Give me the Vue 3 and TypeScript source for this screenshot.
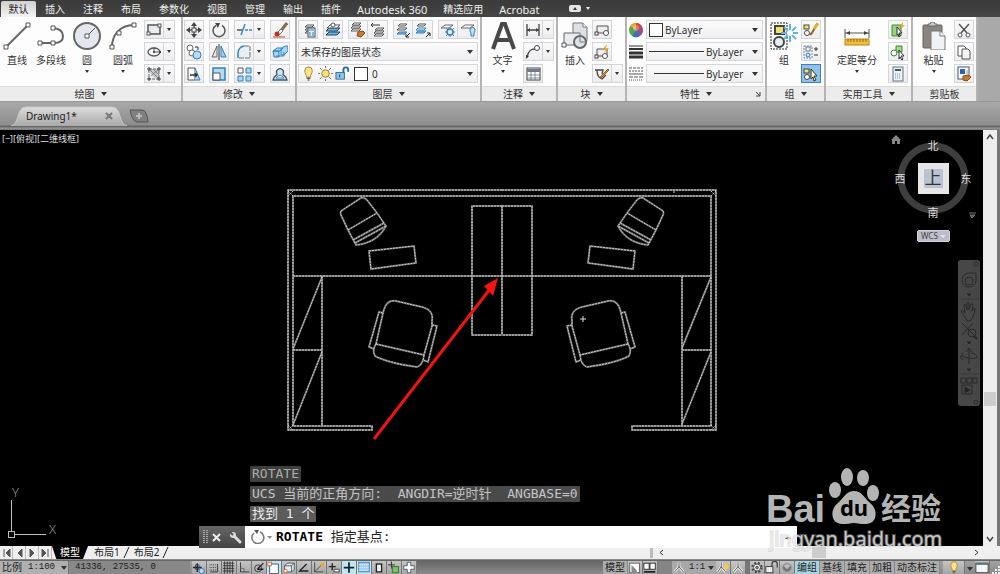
<script setup lang="ts">
import { ref } from 'vue'

const menuTabs: string[] = ['默认', '插入', '注释', '布局', '参数化', '视图', '管理', '输出', '插件']
const wideTabs: string[] = ['Autodesk 360', '精选应用', 'Acrobat']

const activeMenu = ref('默认')
const layerState = ref('未保存的图层状态')
const layer = ref('0')
const command = ref('')

const sheets = '<path d="M5 11l2-2h7l-2 2zM5 8l2-2h7l-2 2zM5 5l2-2h7l-2 2z" fill="#fff" stroke="#555"/>'

const icons: Record<string, string> = {
  rect: '<rect x="2" y="3" width="12" height="9" fill="#e8ebef" stroke="#555" stroke-width="1.500"/><rect x="1" y="10" width="3" height="3" fill="#fff" stroke="#555"/><rect x="12" y="2" width="3" height="3" fill="#fff" stroke="#555"/>',
  ellipse: '<ellipse cx="8" cy="8" rx="6" ry="4" fill="#f4f6f8" stroke="#555" stroke-width="1.300"/><path d="M8 3v5M14 8h-6" stroke="#555"/><circle cx="8" cy="8" r="1" fill="#333"/><rect x="13" y="7" width="2" height="2" fill="#444"/>',
  hatch: '<path d="M3 3h10v10q-8-1-10-10z" fill="#c4c7cc"/><path d="M3 3h10v10H3z" fill="none" stroke="#666" stroke-dasharray="3 1"/><path d="M4 4l9 9M7 3l6 6M13 3L5 10" stroke="#777" stroke-width=".8"/><path d="M1 3h4M3 1v4M11 13h4M13 11v4M1 13h4M3 11v4M11 3h4M13 1v4" stroke="#444"/>',
  move: '<path d="M8 2v12M2 8h12" stroke="#555" stroke-width="1.500"/><rect x="6" y="6" width="4" height="4" fill="#fff" stroke="#444"/><path d="M5 4l3-4 3 4zM5 12l3 4 3-4zM4 5L0 8l4 3zM12 5l4 3-4 3z" fill="#444"/>',
  rotate: '<path d="M5 3.500A6 6 0 1 0 11 3.500" fill="none" stroke="#555" stroke-width="1.500"/><path d="M4 1h5l-2 5z" fill="#444"/>',
  trim: '<path d="M1 8h5" stroke="#555" stroke-width="1.500"/><path d="M9 8h7" stroke="#3a88c8" stroke-width="1.500" stroke-dasharray="3 1"/><path d="M5 13l4-11" stroke="#3a88c8" stroke-width="1.500"/>',
  eraser: '<path d="M15 1l-7 9" stroke="#8c6b4a" stroke-width="3"/><path d="M9 7l-5 5 2 2 5-5z" fill="#eee" stroke="#777"/><circle cx="5" cy="12" r="2.500" fill="#a93a22"/><path d="M1 15h12" stroke="#c43" />',
  copy: '<circle cx="4" cy="4" r="3" fill="#fff" stroke="#666"/><circle cx="6" cy="9" r="3" fill="#fff" stroke="#666"/><circle cx="11" cy="11" r="4" fill="#b9ddf2" stroke="#2f80bf"/><path d="M9 3h3v3" fill="none" stroke="#333"/>',
  mirror: '<path d="M6 2v11H1z" fill="#e5e5e5" stroke="#666"/><path d="M10 2v11h5z" fill="#9ed1ef" stroke="#2f80bf"/><path d="M8 0v16" stroke="#333"/>',
  fillet: '<path d="M2 14V9a7 7 0 0 1 7-7h5v12z" fill="#e9eef3"/><path d="M2 14V9a7 7 0 0 1 6-7" fill="none" stroke="#2f80bf" stroke-width="1.500"/><path d="M8 2h6v12H2" fill="none" stroke="#777" stroke-dasharray="5 1"/>',
  explode: '<path d="M1 7l4-3h6l-3 3zM1 7h6v6H2zM9 5l4-3h3v5l-4 4H9z" fill="#a9d6f0" stroke="#2f80bf"/><path d="M4 12h8v-4" fill="none" stroke="#2f80bf"/>',
  stretch: '<path d="M2 2h7v12H2z" fill="#fff" stroke="#555"/><path d="M9 2l5 12H9" fill="#a9d6f0" stroke="#2f80bf"/><path d="M4 9h7M9 7l2 2-2 2" fill="none" stroke="#333" stroke-width="1.500"/>',
  scale: '<path d="M2 2h12v12H2z" fill="#b5dbf1" stroke="#2f80bf" stroke-width="1.500"/><path d="M2 7h7v7H2z" fill="#fff" stroke="#555"/>',
  array: '<path d="M2 2h5v5H2z" fill="#fff" stroke="#555"/><path d="M10 2h5v5h-5zM2 10h5v5H2zM10 10h5v5h-5z" fill="#a9d6f0" stroke="#2f80bf"/>',
  offset: '<path d="M5 8a3.500 3.500 0 1 1 6 0c0 2 4 2 4 6H1c0-4 4-4 4-6z" fill="#cfe7f5" stroke="#456" stroke-width="1.300"/><path d="M6 10q2-2 4 0l2 2H4z" fill="#fff" stroke="#2f80bf"/>',
  layProp: sheets + '<rect x="8" y="6" width="7" height="9" fill="#e8f0f8" stroke="#456"/><path d="M9 8h5M9 11h2M12 11h2M9 13h2M12 13h2" stroke="#2f80bf"/>',
  layCur: '<path d="M1 13l3-3h11l-3 3zM1 9l3-3h11l-3 3z" fill="#6fb4e0" stroke="#246"/><path d="M2 6l3-3h10l-3 3z" fill="#fff" stroke="#555"/><circle cx="8" cy="3" r="2" fill="#fff" stroke="#555"/>',
  layMatch: '<path d="M1 9l2-2h8l-2 2zM1 6l2-2h8l-2 2zM2 3l2-2h7l-2 2z" fill="#fff" stroke="#555"/><path d="M8 10l5-1 2 2-4 4-4-1z" fill="#c97a2e" stroke="#8a4b14"/>',
  layPrev: '<path d="M4 14l2-2h8l-2 2zM4 11l2-2h8l-2 2zM5 8l2-2h7l-2 2z" fill="#fff" stroke="#555"/><path d="M10 3H1M3 1L1 3l2 2" fill="none" stroke="#333"/>',
  layIso: '<path d="M2 12l2-2h8l-2 2z" fill="#7cbce6" stroke="#2f80bf"/><path d="M2 8l2-2h8l-2 2zM3 4l2-2h7l-2 2z" fill="#fff" stroke="#555"/><path d="M15 11l-4 4M11 12v3h3" fill="none" stroke="#222"/>',
  layUniso: '<path d="M1 11l2-2h8l-2 2z" fill="#7cbce6" stroke="#2f80bf"/><path d="M1 8l2-2h8l-2 2z" fill="#fff" stroke="#2f80bf"/><path d="M2 4l2-2h7l-2 2z" fill="#fff" stroke="#555"/><path d="M11 15l4-4M12 11h3v3" fill="none" stroke="#222"/>',
  layFreeze: '<path d="M1 6l4-3h8l-4 3z" fill="#fff" stroke="#666"/><circle cx="10" cy="10" r="3" fill="#dff0fa" stroke="#2f80bf" stroke-width="1.500"/><path d="M10 5v2M10 13v2M5 10h2M13 10h2M6 6l2 2M12 12l2 2M14 6l-2 2M6 14l2-2" stroke="#2f80bf"/>',
  layOff: '<path d="M1 6l4-3h9l-4 3z" fill="#fff" stroke="#666"/><path d="M10 8a2.500 2.500 0 0 1 5 0c0 2-1 2-1 4v2h-3v-2c0-2-1-2-1-4z" fill="#bfe0f5" stroke="#2f80bf"/>',
  dim: '<path d="M2 2v12M14 2v12M2 8h12" stroke="#444" stroke-width="1.300" fill="none"/><path d="M2 8l3-2v4zM14 8l-3-2v4z" fill="#444"/>',
  leader: '<path d="M2 13c2-7 4-8 8-8" fill="none" stroke="#444" stroke-width="1.300"/><circle cx="12" cy="4" r="2.500" fill="#fff" stroke="#444"/><path d="M1 15l0-4 3 1z" fill="#333"/>',
  table: '<rect x="2" y="2" width="13" height="12" fill="#fff" stroke="#444"/><path d="M2 3h13v3H2z" fill="#778"/><path d="M2 9h13M2 12h13M6 5v9M10 5v9" stroke="#678" stroke-width=".8"/>',
  blkCreate: '<path d="M3 4h11v7H3z" fill="#eee" stroke="#555"/><circle cx="12" cy="11" r="2.500" fill="#fff" stroke="#555"/><rect x="1" y="10" width="3" height="3" fill="#fff" stroke="#444"/>',
  blkEdit: '<path d="M3 5h10v7H3z" fill="#eee" stroke="#555"/><circle cx="11" cy="12" r="2.500" fill="#fff" stroke="#555"/><path d="M13 0l-4 5h3l-2 4 5-5h-3z" fill="#f5a81c"/><rect x="1" y="11" width="3" height="3" fill="#fff" stroke="#444"/>',
  blkAttr: '<path d="M1 4h8l-1 4M3 4c0 5 2 8 5 9l4-4" fill="none" stroke="#444" stroke-width="1.300"/><path d="M14 3l-7 7-1 2 2-1 7-7z" fill="#e39a3b" stroke="#9a5b16"/>',
  grpEdit: '<rect x="1" y="3" width="5" height="4" fill="#f1e46a" stroke="#444"/><circle cx="4" cy="11" r="2.500" fill="#fff" stroke="#444"/><path d="M14 2L9 11l-2 2" stroke="#a35a2a" stroke-width="2"/><path d="M15 1l-4 6" stroke="#d9b32c" stroke-width="3"/>',
  grpAdd: '<path d="M1 2h8v12H1z" fill="none" stroke="#789" stroke-dasharray="2 1"/><rect x="3" y="3" width="4" height="4" fill="#fff" stroke="#678"/><circle cx="5" cy="11" r="2" fill="#cfe6f7" stroke="#2f80bf"/><path d="M11 5h4M13 3v4M11 11h4" stroke="#333"/>',
  grpSel: '<rect x="1" y="3" width="5" height="4" fill="#f1e46a" stroke="#444"/><circle cx="4" cy="11" r="2.500" fill="#fff" stroke="#444"/><path d="M8 3l6 7h-3l2 4-2 1-1-4-2 2z" fill="#fff7c0" stroke="#333"/>',
  selSim: '<path d="M2 3h9v11H2z" fill="#9fd07f" stroke="#3f8a35"/><path d="M7 5l5 6h-3l1 3-1 1-1-3-1 1z" fill="#fff" stroke="#333"/><path d="M13 0l-3 4h2l-1 3 4-4h-2z" fill="#f5a81c"/>',
  quickSel: '<path d="M6 2h6v6H6z" fill="#a7d58a" stroke="#3f8a35"/><circle cx="4" cy="9" r="3" fill="#fff" stroke="#3f8a35"/><path d="M9 6l5 6h-3l2 3-1 1-2-3-1 2z" fill="#fff" stroke="#333"/>',
  calc: '<rect x="3" y="1" width="10" height="14" fill="#eceff3" stroke="#678"/><path d="M5 4h6" stroke="#456" stroke-width="2"/><path d="M5 8h6M5 10h6M5 12h6" stroke="#89a" stroke-dasharray="1 1"/>',
  cut: '<path d="M3 2l8 9M13 2L5 11" stroke="#555" stroke-width="1.500"/><circle cx="4" cy="13" r="2" fill="#fff" stroke="#555"/><circle cx="12" cy="13" r="2" fill="#fff" stroke="#555"/>',
  copyClip: '<path d="M2 2h6l2 2v8H2z" fill="#fff" stroke="#555"/><path d="M6 5h6l2 2v8H6z" fill="#f4f4f4" stroke="#555"/>',
  match: '<rect x="2" y="1" width="11" height="12" fill="#fff" stroke="#456"/><rect x="4" y="3" width="5" height="5" fill="#2f64a8"/><path d="M10 5h2M10 7h2" stroke="#89a"/><path d="M7 10l5-1 3 2-4 4-4-1z" fill="#c97a2e" stroke="#8a4b14"/>',
  bulb: '<path d="M4 5a4 4 0 0 1 8 0c0 3-2 4-2 7H6c0-3-2-4-2-7z" fill="#fbe48a" stroke="#a8862a"/><path d="M6 13h4M7 15h2" stroke="#666" stroke-width="1.500"/>',
  sun: '<circle cx="8" cy="8" r="4" fill="#fae27c" stroke="#8a7530"/><path d="M8 0v2M8 14v2M0 8h2M14 8h2M2 2l2 2M12 12l2 2M14 2l-2 2M4 12l-2 2" stroke="#776a3c"/>',
  unlock: '<rect x="1" y="7" width="9" height="7" fill="#8cc6e8" stroke="#2c6d9c"/><path d="M9 7V4a2.500 2.500 0 0 1 5 0v2" fill="none" stroke="#2c6d9c" stroke-width="2"/><path d="M5 9v3" stroke="#234"/>',
  wheel: '<circle cx="8" cy="8" r="7" fill="#4fa64b"/><path d="M8 8L2 4a7 7 0 0 1 6-3z" fill="#f0a22a"/><path d="M8 8V1a7 7 0 0 1 6 4z" fill="#d94136"/><path d="M8 8l6-3a7 7 0 0 1-2 9z" fill="#a5468f"/><path d="M8 8l4 6a7 7 0 0 1-8 0z" fill="#3b6fc4"/><circle cx="8" cy="6" r="3" fill="#fff" opacity=".3"/>',
  weights: '<path d="M1 2h14" stroke="#333"/><path d="M1 5h14" stroke="#333" stroke-width="2"/><path d="M1 9h14" stroke="#333" stroke-width="3"/><path d="M1 13h14" stroke="#333" stroke-width="3"/>',
  types: '<path d="M1 2h14" stroke="#555" stroke-dasharray="3 1"/><path d="M1 5h14" stroke="#555" stroke-dasharray="2 1"/><path d="M1 8h14" stroke="#555"/><path d="M1 11h14" stroke="#555" stroke-dasharray="4 1"/><path d="M1 14h14" stroke="#555" stroke-dasharray="1 1"/>',
  infer: '<path d="M1 7h10M6 2v10" stroke="#223" stroke-width="1.500"/><path d="M4 4h4v5H4z" fill="none" stroke="#345"/><circle cx="11" cy="11" r="3" fill="#bcd9f0" stroke="#2f70af"/>',
  snap: '<path d="M3 4h8M3 7h8M3 10h8" stroke="#333" stroke-dasharray="1 1"/><path d="M12 3v9H4" fill="none" stroke="#333"/>',
  grid: '<path d="M1 2h13M1 5h13M1 8h13M1 11h13M3 0v14M6 0v14M9 0v14M12 0v14" stroke="#333"/>',
  ortho: '<path d="M4 1v11h10" fill="none" stroke="#333"/><path d="M4 8h4v4" fill="none" stroke="#666"/>',
  polar: '<circle cx="7" cy="8" r="4" fill="none" stroke="#333"/><path d="M6 9l7-7M6 9h7" stroke="#222" stroke-width="1.500"/>',
  osnap: '<path d="M3 3h10v11H3z" fill="#fff" stroke="#346"/><rect x="1" y="1" width="4" height="4" fill="#fff" stroke="#d8622c"/>',
  osnap3: '<path d="M3 5l3-3h8v7l-3 3H3z" fill="#e8ebee" stroke="#456"/><path d="M3 5h8v7M11 5l3-3" fill="none" stroke="#456"/><circle cx="4" cy="11" r="2" fill="#fff" stroke="#d8622c"/>',
  otrack: '<path d="M13 11H3l8-8" fill="none" stroke="#222" stroke-width="1.500"/>',
  ducs: '<path d="M3 1v11h10M3 12l9-9" fill="none" stroke="#444"/><path d="M9 3l4-2 1 3-3 3z" fill="#f5a81c"/>',
  dyn: '<path d="M2 6h8M6 2v8" stroke="#222" stroke-width="1.500"/><path d="M8 9h6v3H8z" fill="#fff" stroke="#333"/>',
  lwt: '<path d="M2 7h12M8 1v12" stroke="#123" stroke-width="2"/>',
  tpy: '<rect x="2" y="1" width="12" height="11" fill="#9fcdf0" stroke="#3d79b4"/><path d="M2 4h12M2 7h12M2 10h12" stroke="#fff" stroke-dasharray="1 1"/>',
  qp: '<rect x="5" y="3" width="6" height="9" fill="#eee" stroke="#222" stroke-width="1.500"/>',
  sc: '<path d="M1 4h8M5 0v8" stroke="#222"/><rect x="6" y="6" width="7" height="7" fill="#7cc265" stroke="#2c6d27"/>',
  am: '<path d="M6 1h4v4h4v4h-4v4H6V9H2V5h4z" fill="#fff" stroke="#456"/>',
  sheet: '<rect x="2" y="2" width="11" height="11" fill="#fff" stroke="#555"/><path d="M4 4l6 6v3H4z" fill="#888"/>',
  views: '<rect x="1" y="2" width="6" height="7" fill="#fff" stroke="#222"/><rect x="8" y="2" width="6" height="7" fill="#fff" stroke="#222"/><path d="M1 12h13" stroke="#222" stroke-width="2"/>',
  anno: '<path d="M8 1v7M8 6l-5 6M8 6l5 6" stroke="#eee" stroke-width="3"/><path d="M8 1v7M8 6l-5 6M8 6l5 6" stroke="#555"/>',
  annoSun: '<path d="M6 1v7M6 6l-4 6M6 6l5 6" stroke="#eee" stroke-width="3"/><path d="M6 1v7M6 6l-4 6M6 6l5 6" stroke="#555"/><circle cx="12" cy="6" r="3" fill="#f7c948"/>',
  gear: '<circle cx="8" cy="7" r="5" fill="none" stroke="#444" stroke-width="3" stroke-dasharray="2 2"/><circle cx="8" cy="7" r="4" fill="#f2f2f2" stroke="#444"/><circle cx="8" cy="7" r="1.500" fill="#888" stroke="#444"/>',
  lock: '<rect x="1" y="6" width="8" height="7" fill="#eee" stroke="#333"/><path d="M8 6V3a3 3 0 0 1 6 0v4" fill="none" stroke="#444" stroke-width="1.500"/>',
  sphere: '<circle cx="8" cy="7" r="5" fill="#777" stroke="#999"/><path d="M4 5a5 5 0 0 1 8 0l-4 4z" fill="#bbb"/>',
  win: '<rect x="1" y="2" width="14" height="11" fill="#f6f6f6" stroke="#333"/><path d="M1 3h14" stroke="#578" stroke-width="2"/>',
}

interface Tool { icon: string; label: string; split?: boolean; on?: boolean }
const t = (icon: string, label: string, split = false, on = false): Tool => ({ icon, label, split, on })

const drawTools = [t('rect', '矩形', true), t('ellipse', '椭圆', true), t('hatch', '图案填充', true)]
const modifyCols: Tool[][] = [
  [t('move', '移动'), t('copy', '复制'), t('stretch', '拉伸')],
  [t('rotate', '旋转'), t('mirror', '镜像'), t('scale', '缩放')],
  [t('trim', '修剪', true), t('fillet', '圆角', true), t('array', '阵列', true)],
  [t('eraser', '删除'), t('explode', '分解'), t('offset', '偏移')],
]
const layerGroups: Tool[][] = [
  [t('layProp', '图层特性')],
  [t('layCur', '置为当前')],
  [t('layMatch', '匹配'), t('layPrev', '上一个')],
  [t('layIso', '隔离'), t('layUniso', '取消隔离')],
  [t('layFreeze', '冻结'), t('layOff', '关闭')],
]
const annoTools = [t('dim', '线性', true), t('leader', '引线', true), t('table', '表格')]
const blockTools = [t('blkCreate', '创建块'), t('blkEdit', '编辑块'), t('blkAttr', '编辑属性', true)]
const groupTools = [t('grpEdit', '组编辑'), t('grpAdd', '添加'), t('grpSel', '组选择', false, true)]
const utilTools = [t('selSim', '快速选择'), t('quickSel', '全部选择'), t('calc', '计算器')]
const clipTools = [t('cut', '剪切'), t('copyClip', '复制剪裁'), t('match', '特性匹配')]

const props = [
  { icon: 'wheel', label: '颜色', mark: 'swatch' },
  { icon: 'weights', label: '线宽', mark: 'rule' },
  { icon: 'types', label: '线型', mark: 'rule short' },
]

const toggles: Tool[] = [
  t('infer', '推断约束'), t('snap', '捕捉'), t('grid', '栅格'), t('ortho', '正交'), t('polar', '极轴'),
  t('osnap', '对象捕捉', false, true), t('osnap3', '三维对象捕捉'), t('otrack', '对象追踪'), t('ducs', '动态 UCS'),
  t('dyn', '动态输入'), t('lwt', '线宽显示', false, true), t('tpy', '透明度', false, true), t('qp', '快捷特性'),
  t('sc', '选择循环'), t('am', '注释监视器'),
]
const textToggles = ['编组', '基线', '填充', '加粗', '动态标注']

/* Left half of the floor plan; the right half is its reflection. */
const halfPlan: string[] = [
  'M502 190H288V430H372V426H293V196H502',
  'M502 206H472V335H502',
  'M293 276H502',
  'M322 276V425',
  'M293 350H322',
  'M341 211L361 198Q364 197 367 200L377 213L386 226Q377 243 356 245L348 230L341 215Q340 213 341 211',
  'M348 230L377 213M353 240L384 223M355 243L386 226',
  'M369 251L414 246L416 263L371 269Z',
  'M376 344L383 313Q386 299 396 301L422 307Q434 310 432 321L432 326L424 355M376 344L424 355',
  'M376 344Q372 350 375 356Q388 363 417 367Q423 365 424 355',
  'M383 313L379 312L369 347L374 349M432 325L437 326L428 362L423 360',
]
const fullPlan: string[] = [
  'M502 206V335',
  'M322 277L293 349M322 352L293 425',
  'M711 277L682 348M711 352L682 424',
]
</script>

<template>
  <div class="app">
    <nav class="menu" aria-label="功能区">
      <button v-for="m in menuTabs" :key="m" :class="{ active: m === activeMenu }" @click="activeMenu = m">{{ m }}</button>
      <button v-for="m in wideTabs" :key="m" :class="{ latin: m !== '精选应用' }" @click="activeMenu = m">{{ m }}</button>
      <button class="min" aria-label="最小化功能区">
        <svg width="22" height="8" viewBox="0 0 22 8"><rect width="12" height="7" rx="2" fill="#e4e4e4" /><path d="M4 5l2-3 2 3z" fill="#333" /><path d="M17 2h4l-2 3z" fill="#eee" /></svg>
      </button>
    </nav>

    <div class="ribbon">
      <section class="panel draw">
        <div class="body">
          <button class="big b34"><svg viewBox="0 0 28 28"><path d="M3 25L25 3" stroke="#666" stroke-width="2" /><path d="M1 23h4v4H1zM23 1h4v4h-4z" fill="#fff" stroke="#555" /></svg>直线</button>
          <button class="big b34"><svg viewBox="0 0 28 28"><path d="M3 21H17Q26 21 26 14T16 6" fill="none" stroke="#666" stroke-width="2" /><path d="M1 19h4v4H1zM14 19h4v4h-4zM14 4h4v4h-4z" fill="#fff" stroke="#555" /></svg>多段线</button>
          <button class="big b38"><svg viewBox="0 0 28 28"><circle cx="14" cy="14" r="13" fill="#e4e8ee" stroke="#666" stroke-width="2" /><path d="M14 14l8-8" stroke="#555" /><path d="M12 12h4v4h-4z" fill="#fff" stroke="#555" /></svg>圆<i class="down"></i></button>
          <button class="big b34"><svg viewBox="0 0 28 28"><path d="M3 25C3 14 10 3 25 3" fill="none" stroke="#666" stroke-width="2" /><path d="M1 23h4v4H1zM8 9h4v4H8zM23 1h4v4h-4z" fill="#fff" stroke="#555" /></svg>圆弧<i class="down"></i></button>
          <div class="col">
            <div v-for="b in drawTools" :key="b.icon" class="tool">
              <button :aria-label="b.label"><svg viewBox="0 0 16 16" v-html="icons[b.icon]"></svg></button>
              <button v-if="b.split" class="more" :aria-label="b.label + '选项'"><i class="down"></i></button>
            </div>
          </div>
        </div>
        <footer><button>绘图<i class="tri"></i></button></footer>
      </section>

      <section class="panel modify">
        <div class="body cols">
          <div v-for="(c, i) in modifyCols" :key="i" class="col">
            <div v-for="b in c" :key="b.icon" class="tool">
              <button :aria-label="b.label"><svg viewBox="0 0 16 16" v-html="icons[b.icon]"></svg></button>
              <button v-if="b.split" class="more" :aria-label="b.label + '选项'"><i class="down"></i></button>
            </div>
          </div>
        </div>
        <footer><button>修改<i class="tri"></i></button></footer>
      </section>

      <section class="panel layers">
        <div class="body stack">
          <div class="groups">
            <div v-for="(g, i) in layerGroups" :key="i" class="tool">
              <button v-for="b in g" :key="b.icon" :aria-label="b.label"><svg viewBox="0 0 16 16" v-html="icons[b.icon]"></svg></button>
            </div>
          </div>
          <div class="combo">
            <select v-model="layerState" aria-label="图层状态"><option>未保存的图层状态</option></select><i class="tri"></i>
          </div>
          <div class="combo">
            <svg v-for="n in ['bulb', 'sun', 'unlock']" :key="n" viewBox="0 0 16 16" v-html="icons[n]"></svg>
            <span class="swatch"></span>
            <select v-model="layer" aria-label="图层"><option>0</option></select><i class="tri"></i>
          </div>
        </div>
        <footer><button>图层<i class="tri"></i></button></footer>
      </section>

      <section class="panel anno">
        <div class="body">
          <button class="big b41"><svg viewBox="0 0 28 28"><path d="M4 27L13 2h3l9 25M8 18h13" fill="none" stroke="#484848" stroke-width="4" /></svg>文字<i class="down"></i></button>
          <div class="col">
            <div v-for="b in annoTools" :key="b.icon" class="tool">
              <button :aria-label="b.label"><svg viewBox="0 0 16 16" v-html="icons[b.icon]"></svg></button>
              <button v-if="b.split" class="more" :aria-label="b.label + '选项'"><i class="down"></i></button>
            </div>
          </div>
        </div>
        <footer><button>注释<i class="tri"></i></button></footer>
      </section>

      <section class="panel block">
        <div class="body">
          <button class="big b34"><svg viewBox="0 0 28 28"><path d="M12 1h10l4 4v14H12z" fill="#dde1e6" stroke="#777" /><path d="M22 1v4h4" fill="#fff" stroke="#777" /><path d="M3 11h16v12H3z" fill="#e9ebee" stroke="#666" /><circle cx="19" cy="20" r="6" fill="#dfe4ea" stroke="#666" stroke-width="2" /><path d="M19 13v7h7" fill="none" stroke="#777" /><path d="M1 21h4v4H1z" fill="#fff" stroke="#555" /></svg>插入</button>
          <div class="col">
            <div v-for="b in blockTools" :key="b.icon" class="tool">
              <button :aria-label="b.label"><svg viewBox="0 0 16 16" v-html="icons[b.icon]"></svg></button>
              <button v-if="b.split" class="more" :aria-label="b.label + '选项'"><i class="down"></i></button>
            </div>
          </div>
        </div>
        <footer><button>块<i class="tri"></i></button></footer>
      </section>

      <section class="panel props">
        <div class="body stack">
          <div v-for="p in props" :key="p.icon" class="prop">
            <svg viewBox="0 0 16 16" v-html="icons[p.icon]"></svg>
            <div class="combo">
              <span :class="p.mark"></span>
              <select :aria-label="p.label"><option>ByLayer</option></select><i class="tri"></i>
            </div>
          </div>
        </div>
        <footer>
          <button>特性<i class="tri"></i></button>
          <button class="launch" aria-label="特性对话框"><svg width="6" height="6" viewBox="0 0 6 6"><path d="M1 1l4 4M5 1v4H1" fill="none" stroke="#444" /></svg></button>
        </footer>
      </section>

      <section class="panel group">
        <div class="body">
          <button class="big b34"><svg viewBox="0 0 28 28"><rect x="1" y="1" width="16" height="26" fill="none" stroke="#222" stroke-dasharray="2 1" /><rect x="5" y="4" width="9" height="8" fill="#f1e46a" stroke="#444" stroke-width="2" /><circle cx="9" cy="20" r="5" fill="#e8edf2" stroke="#444" stroke-width="2" /><path d="M20 2v18M11 11h18M14 5l12 12M26 5L14 17" stroke="#62b1e4" stroke-width="2" /><circle cx="20" cy="11" r="3" fill="#fff" /></svg>组</button>
          <div class="col">
            <div v-for="b in groupTools" :key="b.icon" class="tool">
              <button :class="{ on: b.on }" :aria-label="b.label"><svg viewBox="0 0 16 16" v-html="icons[b.icon]"></svg></button>
            </div>
          </div>
        </div>
        <footer><button>组<i class="tri"></i></button></footer>
      </section>

      <section class="panel utils">
        <div class="body">
          <button class="big b62"><svg viewBox="0 0 28 28"><path d="M2 7v9M26 7v9M2 11h24" stroke="#555" fill="none" /><path d="M3 11l4-2v4zM25 11l-4-2v4z" fill="#444" /><rect x="2" y="17" width="24" height="6" fill="#f0bd3c" stroke="#b8851a" /><path d="M5 17v3M8 17v3M11 17v3M14 17v3M17 17v3M20 17v3M23 17v3" stroke="#96690c" /></svg>定距等分<i class="down"></i></button>
          <div class="col">
            <div v-for="b in utilTools" :key="b.icon" class="tool">
              <button :aria-label="b.label"><svg viewBox="0 0 16 16" v-html="icons[b.icon]"></svg></button>
            </div>
          </div>
        </div>
        <footer><button>实用工具<i class="tri"></i></button></footer>
      </section>

      <section class="panel clip">
        <div class="body">
          <button class="big b41"><svg viewBox="0 0 28 28"><rect x="3" y="3" width="19" height="23" rx="1" fill="#8a8580" stroke="#67625e" /><path d="M8 4h9V2h-2l-1-2h-3l-1 2H8z" fill="#ccc" stroke="#666" /><path d="M11 9h9l5 5v14H11z" fill="#f0f2f6" stroke="#777" /><path d="M20 9v5h5" fill="#fff" stroke="#777" /></svg>粘贴<i class="down"></i></button>
          <div class="col">
            <div v-for="b in clipTools" :key="b.icon" class="tool">
              <button :aria-label="b.label"><svg viewBox="0 0 16 16" v-html="icons[b.icon]"></svg></button>
            </div>
          </div>
        </div>
        <footer><button>剪贴板</button></footer>
      </section>
    </div>

    <div class="docs">
      <div class="doc">
        <svg class="shape" viewBox="0 0 116 20" preserveAspectRatio="none">
          <defs><linearGradient id="tabfill" x1="0" y1="0" x2="0" y2="1"><stop offset="0" stop-color="#dcdcdc" /><stop offset="1" stop-color="#a8a8a8" /></linearGradient></defs>
          <path d="M0 20C9 18 5 1 15 1H101C111 1 107 18 116 20" fill="url(#tabfill)" stroke="#c9c9c9" />
        </svg>
        <button class="name">Drawing1*</button>
        <button class="close" aria-label="关闭图形"><svg width="8" height="8" viewBox="0 0 8 8"><path d="M1 1l6 6M7 1L1 7" stroke="#777" stroke-width="2" /></svg></button>
      </div>
      <button class="new" aria-label="新图形"><svg width="20" height="14" viewBox="0 0 20 14"><path d="M1 1h12q5 0 6 12H8Q3 12 1 1z" fill="#808080" stroke="#555" /><path d="M10 4v6M7 7h6" stroke="#bbb" stroke-width="2" /></svg></button>
    </div>

    <main class="work">
      <div class="canvas">
        <svg class="plan" viewBox="0 130 983 416">
          <g class="ghost">
            <path v-for="d in halfPlan" :key="d" :d="d" />
            <g transform="matrix(-1 0 0 1 1004 0)"><path v-for="d in halfPlan" :key="d" :d="d" /></g>
            <path v-for="d in fullPlan" :key="d" :d="d" />
          </g>
          <g class="dash">
            <path v-for="d in halfPlan" :key="d" :d="d" />
            <g transform="matrix(-1 0 0 1 1004 0)"><path v-for="d in halfPlan" :key="d" :d="d" /></g>
            <path v-for="d in fullPlan" :key="d" :d="d" />
            <path d="M288 191l5 5M293 191l-5 5M711 191l5 5M716 191l-5 5M288 425l5 5M293 425l-5 5M711 425l5 5M716 425l-5 5M673 192h3" />
          </g>
          <path d="M580 319h6M583 316v6" stroke="#ddd" />
          <path d="M374 439L490 289" stroke="#ee1410" stroke-width="3" />
          <path d="M498 278L493 296L484 286Z" fill="#f41410" />
          <g fill="none" stroke="#bdbdbd"><path d="M11.500 500V531M15 534.500H46" /><rect x="8.500" y="531.500" width="6" height="6" /></g>
          <text x="12" y="497" class="axis">Y</text>
          <text x="49" y="534" class="axis">X</text>
        </svg>

        <div class="viewlabel">[−][俯视][二维线框]</div>

        <div class="cube">
          <svg viewBox="890 130 93 115">
            <circle cx="933" cy="178" r="32" fill="none" stroke="#3e3e3e" stroke-width="7" />
            <path d="M896 135l5 5h-1v4h-3v-3h-2v3h-3v-4h-1z" fill="#858585" />
            <rect x="918" y="163" width="31" height="31" fill="#e6e6e6" />
            <rect x="924" y="169" width="19" height="19" fill="#b9c4d0" />
            <path d="M969 213h7M970 215h5l-3 3z" stroke="#777" fill="#555" />
            <text x="933" y="184" class="up">上</text>
            <g class="dir"><text x="933" y="150">北</text><text x="933" y="217">南</text><text x="900" y="183">西</text><text x="966" y="183">东</text></g>
          </svg>
        </div>
        <button class="wcs">WCS<i></i></button>

        <div class="navbar">
          <svg viewBox="0 0 22 146" fill="none" stroke="#292929">
            <circle cx="18" cy="4" r="2" /><circle cx="18" cy="142" r="2" />
            <path d="M11 13h7v8a7 7 0 1 1-7-8z" /><circle cx="11" cy="21" r="4" />
            <path d="M9 34h4l-2 2zM9 82h4l-2 2zM9 109h4l-2 2z" fill="#222" />
            <path d="M1 39h20M1 114h20" stroke="#3a3a3a" />
            <path d="M7 57l-4-6q1-2 3 1l1 1-1-8q1-2 2 0l1 5v-7q1-2 2 0v7l2-6q2-1 2 1l-1 6 2-3q2 0 1 2l-2 7-3 4H9z" />
            <path d="M4 63l12 12M15 63L4 75" /><circle cx="14" cy="73" r="4" /><path d="M16 76l3 3" stroke-width="2" />
            <path d="M11 89v15M8 92l3-4 3 4M5 93q-4 4 6 5t8-2-6-3M5 100l-3-3 3-2" />
            <path d="M3 118h5v5H3zM9 118h5v5H9zM15 118h4v5h-4zM4 125h10v9H4z" /><path d="M7 127l5 3-5 3z" fill="#222" />
          </svg>
        </div>

        <div class="dock">
          <div class="line old">ROTATE</div>
          <div class="line mid">UCS 当前的正角方向:&nbsp; ANGDIR=逆时针&nbsp; ANGBASE=0</div>
          <div class="line">找到 1 个</div>
          <div class="cmd">
            <div class="grip">
              <svg width="6" height="16" viewBox="0 0 6 16"><path d="M1 1v14M4 1v14" stroke="#aaa" stroke-width="2" stroke-dasharray="1 1" /></svg>
              <button aria-label="关闭命令行"><svg width="9" height="9" viewBox="0 0 9 9"><path d="M1 1l7 7M8 1L1 8" stroke="#eee" stroke-width="2" /></svg></button>
              <button aria-label="自定义"><svg width="13" height="13" viewBox="0 0 13 13"><path d="M5 5l6 6" stroke="#ddd" stroke-width="3" stroke-linecap="round" /><circle cx="4" cy="4" r="3" fill="#ddd" /><path d="M0 0l4 4" stroke="#555" stroke-width="2" /></svg></button>
            </div>
            <svg width="22" height="14" viewBox="0 0 22 14"><path d="M4 3a6 6 0 1 0 6-1" fill="none" stroke="#777" stroke-width="1.500" /><path d="M4 0h5l-2 4z" fill="#555" /><path d="M17 6h5l-2 3z" fill="#888" /></svg>
            <label for="cmd"><b>ROTATE</b> 指定基点:</label>
            <input id="cmd" v-model="command" />
            <button class="recent" aria-label="历史记录"><i></i></button>
          </div>
        </div>
      </div>

      <div class="vscroll">
        <button aria-label="向上滚动"><svg width="8" height="6" viewBox="0 0 8 6"><path d="M1 5l3-4 3 4" fill="none" stroke="#444" stroke-width="1.500" /></svg></button>
        <div class="thumb"></div>
        <button aria-label="向下滚动"><svg width="8" height="6" viewBox="0 0 8 6"><path d="M1 1l3 4 3-4" fill="none" stroke="#444" stroke-width="1.500" /></svg></button>
      </div>
    </main>

    <div class="sheets">
      <button v-for="(d, i) in ['M3 1v8M9 1L5 5l4 4z', 'M8 1L4 5l4 4z', 'M3 1l4 4-4 4z', 'M8 1v8M2 1l4 4-4 4z']" :key="i" class="step" :aria-label="'布局导航 ' + (i + 1)">
        <svg width="11" height="10" viewBox="0 0 11 10"><path :d="d" fill="#555" stroke="#555" /></svg>
      </button>
      <button class="sheet model">模型</button>
      <button class="sheet">布局1</button><svg width="8" height="13" viewBox="0 0 8 13"><path d="M1 12L6 1" stroke="#222" /></svg>
      <button class="sheet">布局2</button><svg width="8" height="13" viewBox="0 0 8 13"><path d="M1 12L6 1" stroke="#222" /></svg>
      <div class="hscroll">
        <i class="splitter"></i>
        <button aria-label="向左滚动"><svg width="5" height="7" viewBox="0 0 5 7"><path d="M4 1L1 3.500 4 6" fill="none" stroke="#333" /></svg></button>
        <div class="thumb"></div>
        <button aria-label="向右滚动"><svg width="5" height="7" viewBox="0 0 5 7"><path d="M1 1l3 2.500L1 6" fill="none" stroke="#333" /></svg></button>
      </div>
    </div>

    <div class="status">
      <button class="scale">比例 <span>1:100</span><i class="tri"></i></button>
      <div class="coords">41336, 27535, 0</div>
      <button v-for="b in toggles" :key="b.icon" class="tg" :class="{ on: b.on }" :aria-label="b.label"><svg viewBox="0 0 16 14" v-html="icons[b.icon]"></svg></button>
      <div class="fill"></div>
      <button class="txt">模型</button>
      <button class="tg" aria-label="布局"><svg viewBox="0 0 16 14" v-html="icons.sheet"></svg></button>
      <button class="tg" aria-label="快速查看"><svg viewBox="0 0 16 14" v-html="icons.views"></svg></button>
      <div class="dark"></div>
      <button class="ratio"><svg viewBox="0 0 16 14" v-html="icons.anno"></svg><span>1:1</span><i class="tri"></i></button>
      <button class="tg" aria-label="注释可见性"><svg viewBox="0 0 16 14" v-html="icons.annoSun"></svg></button>
      <button class="tg" aria-label="自动缩放"><svg viewBox="0 0 16 14" v-html="icons.anno"></svg></button>
      <div class="gap"></div>
      <button class="tg" aria-label="切换工作空间"><svg viewBox="0 0 16 14" v-html="icons.gear"></svg></button>
      <button class="tg" aria-label="锁定"><svg viewBox="0 0 16 14" v-html="icons.lock"></svg></button>
      <button class="tg" aria-label="硬件加速"><svg viewBox="0 0 16 14" v-html="icons.sphere"></svg></button>
      <button v-for="x in textToggles" :key="x" class="txt" :class="{ on: x === '编组' }">{{ x }}</button>
      <button class="tg lamp" aria-label="隔离对象"><svg viewBox="0 0 16 16" v-html="icons.bulb"></svg></button>
      <i class="tri"></i>
      <button class="tg" aria-label="全屏显示"><svg viewBox="0 0 16 14" v-html="icons.win"></svg></button>
      <svg class="corner" width="8" height="8" viewBox="0 0 8 8"><path d="M7 0v8M4 3v5M1 6v2" stroke="#eee" stroke-dasharray="2 1" stroke-width="2" /></svg>
    </div>

    <svg class="mark" viewBox="768 466 180 88">
      <g fill="#b4b4b4">
        <text x="766" y="522" class="bai">Bai</text>
        <ellipse cx="847" cy="477" rx="6" ry="9" /><ellipse cx="863" cy="478" rx="6" ry="8" />
        <ellipse cx="835" cy="490" rx="6" ry="8" /><ellipse cx="873" cy="493" rx="6" ry="8" />
        <path d="M854 491C861 491 864 497 868 501C874 506 877 511 875 518C872 526 863 524 854 523C845 524 836 526 833 518C831 511 834 506 840 501C844 497 847 491 854 491Z" />
        <text x="881" y="519" class="jy">经验</text>
      </g>
      <text x="854" y="516" class="du">du</text>
      <text x="769" y="546" class="url">jingyan.baidu.com</text>
    </svg>
  </div>
</template>

<style>
body { margin: 0; background: #000; }
</style>

<style scoped>
.app { position: relative; display: flex; flex-direction: column; min-height: 100vh; overflow: hidden; font: 10px/14px "Noto Sans", "Noto Sans CJK SC", sans-serif; color: #333; }
button, select, input { font: inherit; color: inherit; border: 0; margin: 0; padding: 0; background: none; appearance: none; border-radius: 0; outline: 0; }
button { cursor: pointer; }
svg { display: block; flex: none; }

.menu { display: flex; height: 17px; background: linear-gradient(#3a3a3a, #454545); color: #eee; padding-left: 1px; box-sizing: border-box; }
.menu button { padding: 0 9px; white-space: nowrap; line-height: 17px; margin-top: 1px; height: 16px; }
.menu button.active { width: 35px; padding: 0; background: linear-gradient(#cfcfcf, #f4f4f4); color: #222; border-radius: 2px 2px 0 0; }
.menu button.latin { font-size: 11px; padding: 0 7px; }
.menu .min { display: flex; align-items: center; margin-left: 13px; }

.ribbon { display: flex; height: 85px; background: linear-gradient(90deg, #c4c4c4, #a9a9a9); border-bottom: 1px solid #989898; box-sizing: border-box; }
.panel { display: flex; flex-direction: column; box-sizing: border-box; border-right: 2px solid #b4b4b4; background: #fdfdfd; flex: none; }
.draw { width: 183px; }
.modify { width: 114px; }
.layers { width: 185px; }
.anno { width: 76px; }
.block { width: 69px; }
.props { width: 140px; }
.group { width: 59px; }
.utils { width: 87px; }
.clip { width: 65px; }
.body { display: flex; flex: 1; padding-top: 3px; }
.cols { gap: 5px; padding-left: 1px; }
.stack { flex-direction: column; gap: 3px; padding-left: 1px; padding-right: 2px; }
.panel footer { position: relative; display: flex; justify-content: center; height: 15px; background: #ececec; border-top: 1px solid #dcdcdc; box-sizing: border-box; }
.panel footer button { display: flex; align-items: center; gap: 6px; }
.panel footer .launch { position: absolute; right: 4px; top: 4px; }
.big { display: flex; flex-direction: column; align-items: center; line-height: 14px; white-space: nowrap; }
.big svg { width: 28px; height: 28px; margin: 2px 0 3px; }
.b34 { width: 34px; }
.b38 { width: 38px; }
.b41 { width: 41px; }
.b62 { width: 62px; }
.draw .body .col { margin-left: 4px; }
.col { display: flex; flex-direction: column; gap: 3px; }
.tool { display: flex; height: 19px; }
.tool button { display: flex; align-items: center; justify-content: center; width: 20px; height: 19px; box-sizing: border-box; border: 1px solid #d3d5d9; background: linear-gradient(#fafafa, #ededf0); }
.tool button + button { border-left: 0; }
.tool .more { width: 11px; }
.tool .on { background: #8fc1ec; border-color: #3d7fb8; }
.tool svg, .prop > svg { width: 16px; height: 16px; }
.groups { display: flex; gap: 5px; }
.down { width: 0; height: 0; border: 2px solid transparent; border-top: 3px solid #333; border-bottom: 0; }
.big .down { margin-top: 3px; }
.tri { width: 0; height: 0; border: 3px solid transparent; border-top: 4px solid #333; border-bottom: 0; flex: none; }
.combo { position: relative; display: flex; align-items: center; gap: 2px; height: 19px; flex: 1; min-width: 0; box-sizing: border-box; border: 1px solid #d6d6da; background: linear-gradient(#fbfbfb, #efeff1); padding: 0 2px; }
.stack > .combo { flex: none; }
.combo svg { width: 15px; height: 15px; }
.combo select { flex: 1; min-width: 0; height: 17px; }
.combo .tri { position: absolute; right: 4px; top: 7px; pointer-events: none; }
.swatch { width: 12px; height: 12px; border: 1px solid #333; background: #fff; margin: 0 2px; flex: none; }
.prop .swatch { margin: 0; }
.prop { display: flex; gap: 2px; align-items: center; height: 19px; }
.rule { height: 1px; background: #333; width: 55px; flex: none; }
.rule.short { width: 50px; margin-left: 5px; }

.docs { display: flex; align-items: flex-start; height: 28px; padding: 4px 0 0 11px; box-sizing: border-box; background: linear-gradient(#a9a9a9, #8e8e8e 22px, #8e8e8e 23px, #666 24px, #666 25px, #999 26px, #777); }
.doc { position: relative; display: flex; align-items: center; width: 116px; height: 20px; }
.shape { position: absolute; inset: 0; width: 100%; height: 100%; }
.doc button { position: relative; }
.name { margin-left: 15px; color: #222; }
.close { margin-left: auto; margin-right: 14px; }
.new { margin: 3px 0 0 2px; }

.work { display: flex; flex: 1; min-height: 416px; background: #000; }
.canvas { position: relative; flex: 1; min-width: 0; }
.plan { position: absolute; inset: 0; width: 100%; height: 100%; }
.ghost { fill: none; stroke: #666; stroke-width: 2; }
.dash { fill: none; stroke: #ccc; stroke-width: 1; stroke-dasharray: 2 1; }
.axis { font: 300 13px "Open Sans", "Noto Sans", sans-serif; fill: #aaa; }
.viewlabel { position: absolute; left: 2px; top: 2px; font-size: 9px; color: #ddd; }
.cube { position: absolute; right: 0; top: 0; }
.cube svg { width: 93px; height: 115px; }
.up { font: 17px "Noto Sans CJK SC", sans-serif; fill: #333; text-anchor: middle; }
.dir { font: 11px "Noto Sans CJK SC", sans-serif; fill: #ddd; text-anchor: middle; }
.wcs { position: absolute; right: 33px; top: 100px; display: flex; align-items: center; justify-content: space-between; width: 33px; height: 12px; box-sizing: border-box; padding: 0 3px; border-radius: 2px; background: #bcbcca; border: 1px solid #d5d5df; color: #444; font-size: 8px; line-height: 10px; }
.wcs i { border: 3px solid transparent; border-top: 3px solid #dfe6f2; border-bottom: 0; }
.navbar { position: absolute; right: 3px; top: 130px; border-radius: 3px; background: #474747; }
.navbar svg { width: 22px; height: 146px; }

.dock { position: absolute; left: 199px; right: 186px; bottom: -2px; z-index: 1; display: flex; flex-direction: column; align-items: flex-start; gap: 4px; font: 13px/16px "DejaVu Sans Mono", "Noto Sans CJK SC", monospace; }
.line { margin-left: 51px; padding: 0 2px; height: 16px; background: #5c5c5c; color: #eee; border-radius: 1px; white-space: nowrap; }
.line.old { background: #3f3f3f; color: #aaa; }
.line.mid { background: #4a4a4a; color: #c4c4c4; }
.cmd { display: flex; align-items: center; align-self: stretch; height: 22px; background: #fff; color: #222; }
.cmd .grip { display: flex; flex: none; align-items: center; gap: 3px; width: 46px; height: 22px; box-sizing: border-box; padding-left: 4px; margin-right: 5px; background: linear-gradient(#666, #444); }
.cmd .grip button + button { margin-left: 5px; }
.cmd label { margin-left: 4px; white-space: nowrap; }
.cmd b { color: #000; }
.cmd input { flex: 1; min-width: 0; }
.recent { padding: 0 6px; }
.recent i { display: block; border: 3px solid transparent; border-bottom: 3px solid #555; border-top: 0; }

.vscroll { display: flex; flex-direction: column; align-items: stretch; width: 14px; background: #eee; border-right: 3px solid #777; }
.vscroll button { display: flex; align-items: center; justify-content: center; height: 14px; }
.vscroll .thumb { height: 14px; margin: 248px 1px auto; background: #cdcdcd; }

.sheets { display: flex; align-items: center; height: 14px; background: #efefef; border-bottom: 1px solid #888; box-sizing: border-box; color: #222; }
.step { display: flex; align-items: center; justify-content: center; width: 13px; height: 13px; box-sizing: border-box; border-right: 1px solid #bbb; }
.sheet { line-height: 13px; height: 13px; padding: 0 3px; white-space: nowrap; }
.sheet.model { background: #000; color: #fff; width: 36px; margin-right: 3px; clip-path: polygon(0 0, 100% 0, 86% 100%, 12% 100%); }
.hscroll { display: flex; align-items: center; flex: 0 0 auto; width: 35%; margin-left: auto; height: 12px; }
.splitter { width: 3px; height: 11px; background: #bbb; }
.hscroll button { padding: 0 6px; }
.hscroll .thumb { flex: 0 0 14px; height: 11px; margin: 0 auto; background: #cdcdcd; }
.hscroll button:last-child { margin-right: 15px; }

.status { display: flex; height: 14px; overflow: hidden; align-items: stretch; background: linear-gradient(#a2a2a2, #8a8a8a); color: #222; border-top: 1px solid #666; box-sizing: border-box; line-height: 13px; white-space: nowrap; }
.status > * { flex: none; }
.status span, .coords { font: 9px/13px "Liberation Mono", monospace; }
.scale { display: flex; gap: 6px; width: 68px; padding-left: 2px; align-items: center; background: #b0b0b0; }
.coords { width: 122px; box-sizing: border-box; padding-left: 6px; background: #888; margin-right: 2px; border-left: 1px solid #777; }
.tg { width: 15px; box-sizing: border-box; border-right: 1px solid #777; background: linear-gradient(#c5c5c5, #a6a6a6); }
.tg svg { width: 14px; height: 13px; }
.tg.on { background: #c3e6ee; }
.status .fill { flex: 1 1 0; background: linear-gradient(#666, #8b8b8b); }
.txt { padding: 0 2px; border-right: 1px solid #888; background: #adadad; }
.txt.on { background: #a6d6e2; }
.dark { width: 14px; background: #858585; }
.ratio { display: flex; align-items: center; gap: 3px; width: 44px; background: #a8a8a8; }
.ratio svg { width: 14px; height: 13px; }
.gap { width: 4px; background: #777; }
.lamp { width: 22px; display: flex; justify-content: center; margin-left: 3px; }
.status > .tri { margin: 6px 2px 0; }
.corner { margin: 5px 0 0 2px; }

.mark { position: absolute; right: 52px; bottom: 20px; width: 180px; height: 88px; z-index: 2; pointer-events: none; }
.bai { font: bold 38px "Liberation Sans", Arial, sans-serif; }
.jy { font: bold 30px "Noto Sans CJK SC", sans-serif; }
.du { font: bold 22px "Noto Sans", sans-serif; text-anchor: middle; fill: #000; }
.url { font: 20px "Noto Sans", sans-serif; fill: #ececec; fill-opacity: .8; stroke: #bbb; stroke-opacity: .4; paint-order: stroke; stroke-width: 2; }
</style>
